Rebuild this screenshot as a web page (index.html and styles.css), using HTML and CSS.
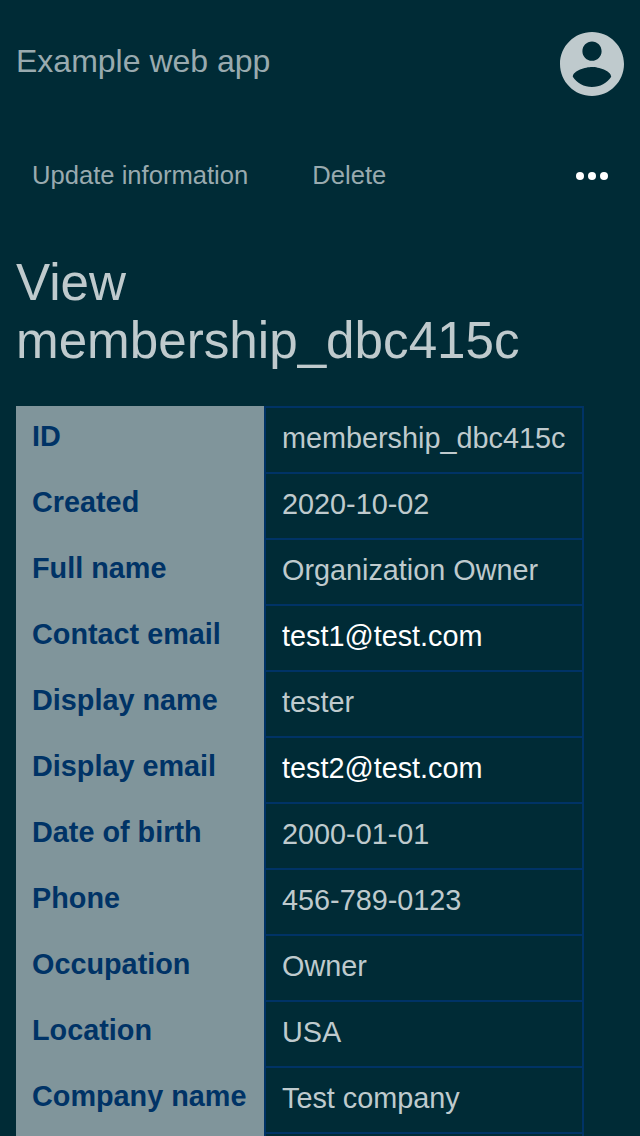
FILE: index.html
```html
<!DOCTYPE html>
<html lang="en">
<head>
<meta charset="utf-8">
<title>Example web app</title>
<link rel="stylesheet" href="styles.css">
</head>
<body>
<header class="header">
<span class="brand">Example web app</span>
<svg class="account" viewBox="0 0 20 20"><path d="M10 0C4.480 0 0 4.480 0 10s4.480 10 10 10 10-4.480 10-10S15.520 0 10 0zm0 3c1.660 0 3 1.340 3 3s-1.340 3-3 3-3-1.340-3-3 1.340-3 3-3zm0 14.200c-2.500 0-4.710-1.280-6-3.220.030-1.990 4-3.080 6-3.080 1.990 0 5.970 1.090 6 3.080-1.290 1.940-3.500 3.220-6 3.220z"/></svg>
</header>
<nav class="nav">
<a class="nav-link">Update information</a>
<a class="nav-link">Delete</a>
<svg class="more" viewBox="0 0 32 8"><circle cx="4" cy="4" r="4"/><circle cx="16" cy="4" r="4"/><circle cx="28" cy="4" r="4"/></svg>
</nav>
<h1 class="title">View membership_dbc415c</h1>
<table class="details">
<tr><th>ID</th><td>membership_dbc415c</td></tr>
<tr><th>Created</th><td>2020-10-02</td></tr>
<tr><th>Full name</th><td>Organization Owner</td></tr>
<tr><th>Contact email</th><td><a class="mail">test1@test.com</a></td></tr>
<tr><th>Display name</th><td>tester</td></tr>
<tr><th>Display email</th><td><a class="mail">test2@test.com</a></td></tr>
<tr><th>Date of birth</th><td>2000-01-01</td></tr>
<tr><th>Phone</th><td>456-789-0123</td></tr>
<tr><th>Occupation</th><td>Owner</td></tr>
<tr><th>Location</th><td>USA</td></tr>
<tr><th>Company name</th><td>Test company</td></tr>
<tr class="cut"><th></th><td></td></tr>
</table>
</body>
</html>
```

FILE: styles.css
```css
* { box-sizing: border-box; }
html, body { height: 1136px; overflow: hidden; }
body {
  margin: 0;
  background: #002b36;
  color: #bfcacd;
  font-family: "Liberation Sans", Arial, sans-serif;
}
.header {
  display: flex;
  justify-content: space-between;
  align-items: center;
  height: 128px;
  padding: 0 16px;
}
.brand { font-size: 32px; line-height: 36px; color: #99aaaf; padding-bottom: 7px; }
.account { width: 64px; height: 64px; fill: #bfcacd; }
.nav {
  display: flex;
  align-items: center;
  gap: 64px;
  height: 96px;
  padding: 0 32px;
}
.nav-link { font-size: 25.6px; line-height: 30px; color: #99aaaf; padding-bottom: 2px; }
.more { width: 32px; height: 8px; margin-left: auto; fill: #fff; }
.title {
  margin: 0;
  padding: 30px 16px 0;
  height: 182px;
  font-size: 51.2px;
  line-height: 58px;
  font-weight: 400;
}
.details {
  margin-left: 16px;
  width: 568px;
  table-layout: fixed;
  border-collapse: separate;
  border-spacing: 0;
  font-size: 28.8px;
  line-height: 32px;
  text-align: left;
}
.details th {
  width: 248px;
  height: 66px;
  padding: 0 16px 6px;
  background: #80959b;
  color: #003366;
}
.details td {
  height: 66px;
  padding: 0 16px 4px;
  border: 2px solid #003366;
  border-bottom: 0;
  white-space: nowrap;
}
.details .cut th, .details .cut td { height: 4px; padding: 0; }
.mail { color: #fff; }
```
